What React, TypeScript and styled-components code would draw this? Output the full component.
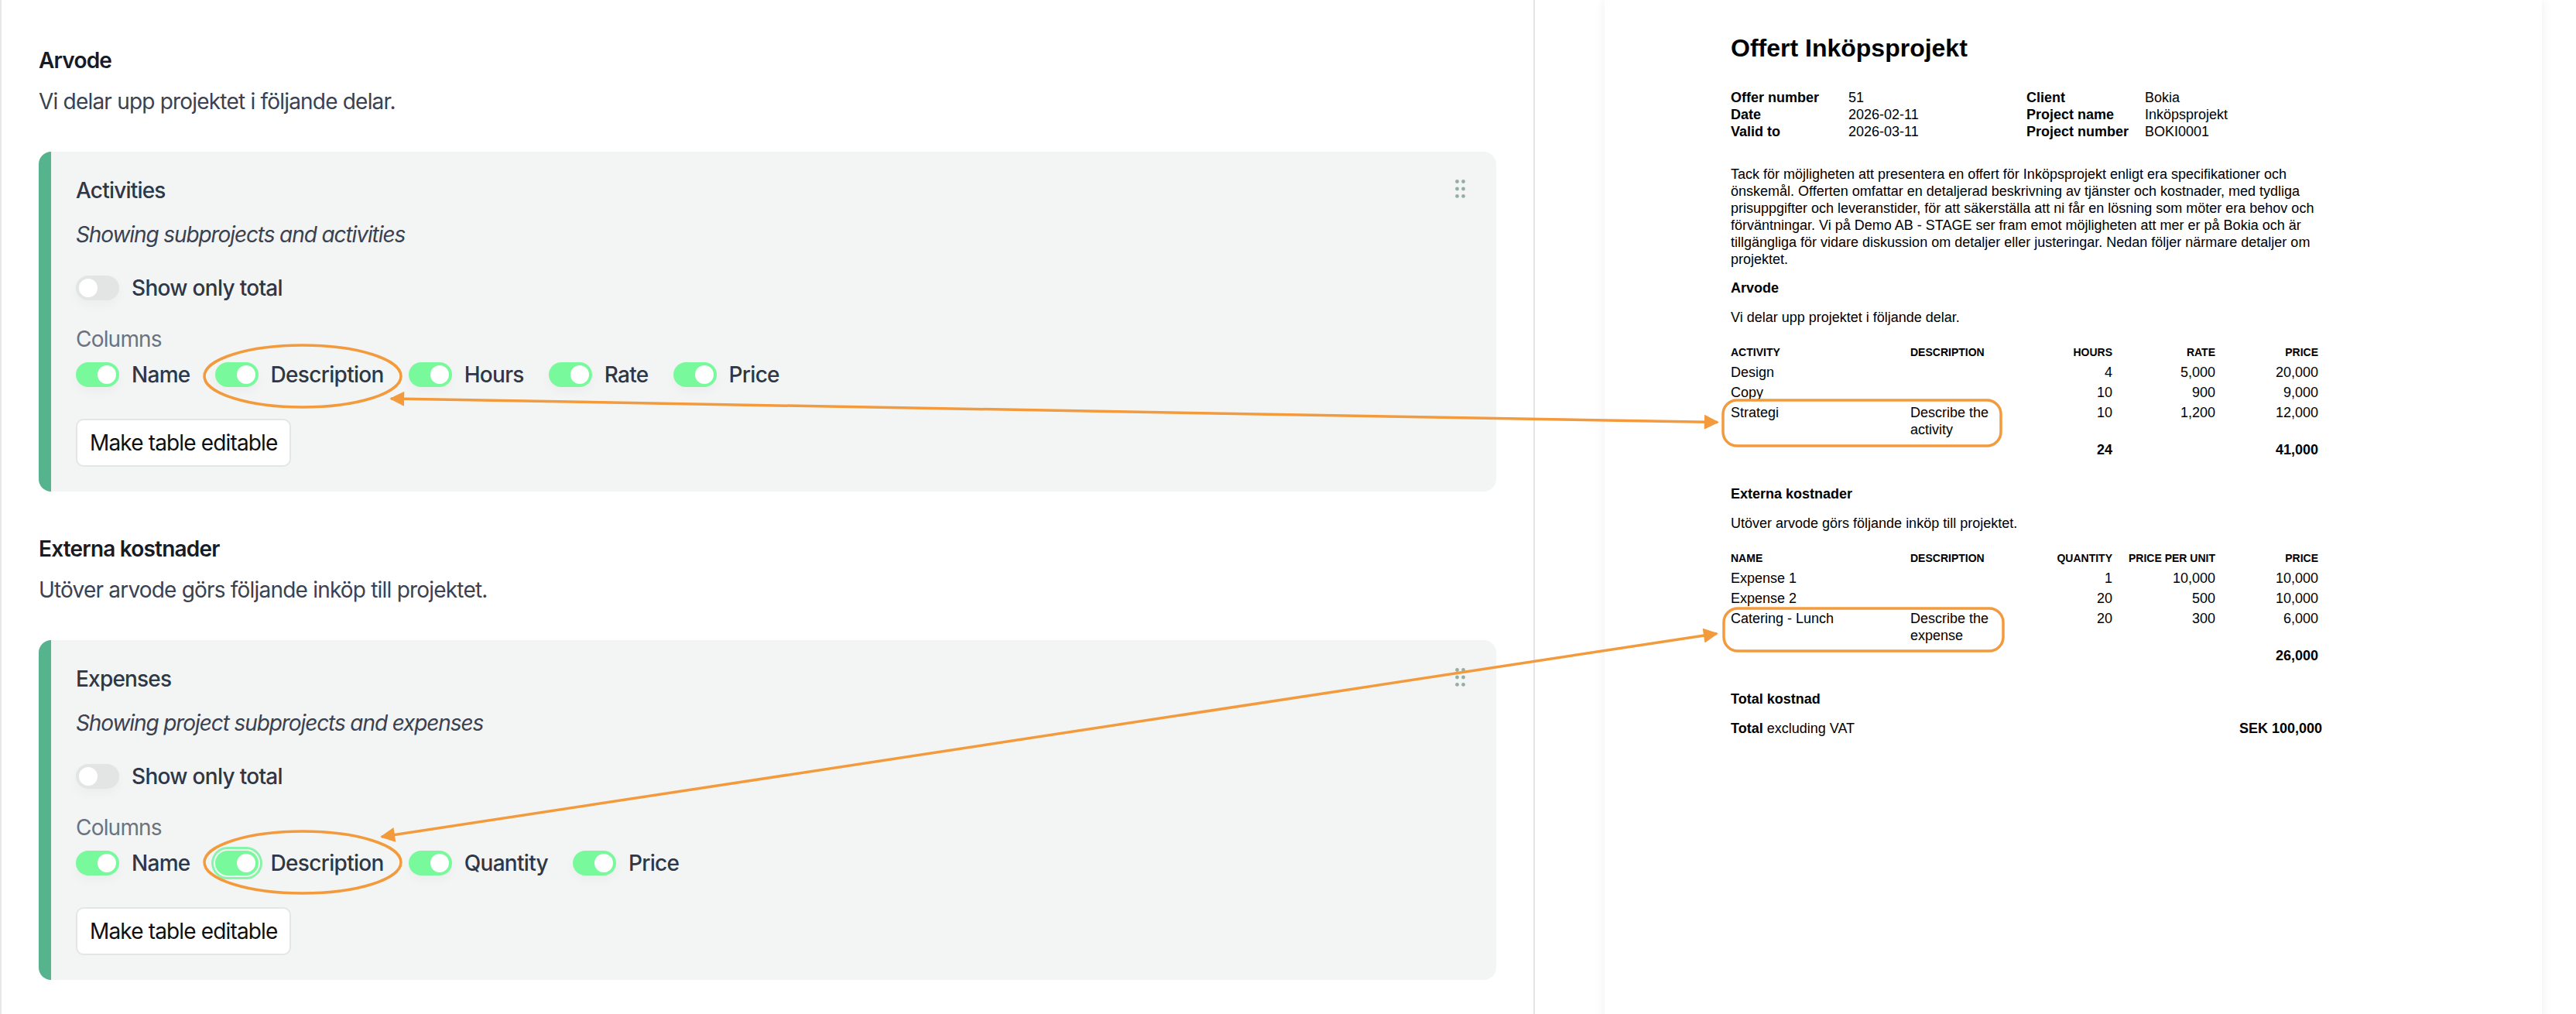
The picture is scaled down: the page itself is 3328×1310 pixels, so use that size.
import React from "react";
import styled, { createGlobalStyle } from "styled-components";

const GlobalStyle = createGlobalStyle`
  html, body { margin: 0; padding: 0; background: #ffffff; }
  body { width: 3328px; height: 1310px; overflow: hidden; font-family: Inter, "Noto Sans", sans-serif; }
  * { box-sizing: border-box; }
`;

const ORANGE = "#f39a3c";

const Shell = styled.div`
  position: relative;
  display: flex;
  width: 3328px;
  height: 1310px;
  overflow: hidden;
  background: #ffffff;
`;

/* ---------- left editor ---------- */

const Editor = styled.div`
  flex: none;
  width: 1983px;
  height: 100%;
  padding: 60px 48px 0;
  border-left: 2px solid #e6e7ea;
  border-right: 2px solid #e4e5e9;
  display: flex;
  flex-direction: column;
  font-family: Inter, "Noto Sans", sans-serif;
  letter-spacing: -0.8px;
`;

const Section = styled.section`
  display: flex;
  flex-direction: column;
  & + & {
    margin-top: 56px;
  }
`;

const SectionHeading = styled.h2`
  margin: 0;
  font-size: 28px;
  line-height: 36px;
  font-weight: 600;
  color: #161b26;
`;

const SectionLead = styled.p`
  margin: 17px 0 0;
  font-size: 28px;
  line-height: 36px;
  font-weight: 400;
  color: #3a4150;
`;

const Card = styled.div`
  margin-top: 47px;
  background: #f3f5f4;
  border-left: 16px solid #55b38e;
  border-radius: 16px;
  padding: 32px 40px 32px 32px;
  display: flex;
  flex-direction: column;
`;

const CardHeader = styled.div`
  display: flex;
  justify-content: space-between;
  align-items: flex-start;
  height: 36px;
`;

const CardTitle = styled.h3`
  margin: 0;
  font-size: 28px;
  line-height: 36px;
  font-weight: 500;
  color: #2f3747;
`;

const Grip = styled.svg`
  margin-top: 4px;
  flex: none;
`;

const CardSubtitle = styled.p`
  margin: 21px 0 0;
  font-size: 28px;
  line-height: 36px;
  font-style: italic;
  letter-spacing: -1.1px;
  color: #3a4150;
`;

const TotalRow = styled.div`
  margin-top: 35px;
  height: 32px;
  display: flex;
  align-items: center;
  gap: 16px;
`;

const ColumnsLabel = styled.div`
  margin-top: 32px;
  font-size: 28px;
  line-height: 36px;
  color: #6b7280;
`;

const ColumnsRow = styled.div`
  margin-top: 12px;
  height: 32px;
  display: flex;
  align-items: center;
  gap: 32px;
`;

const ToggleItem = styled.label`
  display: flex;
  align-items: center;
  gap: 16px;
`;

const Track = styled.span<{ $on: boolean; $focus?: boolean }>`
  flex: none;
  width: 56px;
  height: 32px;
  border-radius: 16px;
  padding: 4px;
  display: flex;
  align-items: center;
  justify-content: ${(p) => (p.$on ? "flex-end" : "flex-start")};
  background: ${(p) => (p.$on ? "#78fa9c" : "#e3e4e4")};
  box-shadow: ${(p) =>
    p.$focus ? "0 0 0 2px #f3f5f4, 0 0 0 5px #86f5a8" : "0 6px 14px rgba(0,0,0,0.03)"};
`;

const Knob = styled.span`
  width: 24px;
  height: 24px;
  border-radius: 50%;
  background: #ffffff;
`;

const ToggleText = styled.span`
  font-size: 28px;
  line-height: 36px;
  font-weight: 500;
  letter-spacing: -0.7px;
  color: #2f3747;
  white-space: nowrap;
`;

const EditButton = styled.button`
  margin-top: 41px;
  align-self: flex-start;
  height: 62px;
  padding: 0 16px;
  border: 2px solid #e3e5e9;
  border-radius: 10px;
  background: #ffffff;
  font-family: Inter, "Noto Sans", sans-serif;
  font-size: 28px;
  font-weight: 400;
  letter-spacing: -0.85px;
  color: #0f0f0f;
`;

/* ---------- right preview ---------- */

const Preview = styled.div`
  flex: 1;
  height: 100%;
  padding-left: 90px;
  background: #ffffff;
`;

const Page = styled.div`
  width: 1211px;
  min-height: 1400px;
  background: #ffffff;
  box-shadow: 0 0 14px rgba(0, 0, 0, 0.07);
  padding: 43px 0 0 163px;
  font-family: "Liberation Sans", Arial, sans-serif;
  color: #000000;
`;

const PdfBody = styled.div`
  width: 764px;
  display: flex;
  flex-direction: column;
`;

const PdfTitle = styled.h1`
  margin: 0;
  font-size: 32px;
  line-height: 38px;
  font-weight: 700;
`;

const MetaGrid = styled.div`
  margin-top: 34px;
  display: grid;
  grid-template-columns: 152px 230px 153px auto;
  font-size: 18px;
  line-height: 22px;
`;

const MetaLabel = styled.span`
  font-weight: 700;
`;

const MetaValue = styled.span`
  font-weight: 400;
`;

const Intro = styled.p`
  margin: 33px 0 0;
  width: 790px;
  font-size: 18px;
  line-height: 22px;
  white-space: nowrap;
`;

const PdfHeading = styled.h4<{ $mt: number }>`
  margin: ${(p) => p.$mt}px 0 0;
  font-size: 18px;
  line-height: 22px;
  font-weight: 700;
`;

const PdfLead = styled.p`
  margin: 16px 0 0;
  font-size: 18px;
  line-height: 22px;
`;

const Table = styled.div`
  margin-top: 23px;
  display: grid;
  grid-template-columns: 232px 128px 133px 133px 133px;
`;

const Th = styled.div<{ $right?: boolean }>`
  font-size: 14px;
  line-height: 22px;
  font-weight: 700;
  text-transform: uppercase;
  padding-bottom: 2px;
  text-align: ${(p) => (p.$right ? "right" : "left")};
  white-space: nowrap;
`;

const Td = styled.div<{ $right?: boolean; $bold?: boolean }>`
  font-size: 18px;
  line-height: 22px;
  padding: 2px 0;
  text-align: ${(p) => (p.$right ? "right" : "left")};
  font-weight: ${(p) => (p.$bold ? 700 : 400)};
`;

const TotalLine = styled.div`
  margin-top: 16px;
  display: flex;
  justify-content: space-between;
  font-size: 18px;
  line-height: 22px;
`;

const Strong = styled.span`
  font-weight: 700;
`;

/* ---------- annotation overlay ---------- */

const Overlay = styled.svg`
  position: absolute;
  left: 0;
  top: 0;
  pointer-events: none;
`;

/* ---------- pieces ---------- */

const GripIcon = () => (
  <Grip width="13" height="24" viewBox="0 0 13 24">
    {[2.5, 12, 21.4].map((cy) =>
      [2.5, 10.5].map((cx) => <circle key={`${cx}-${cy}`} cx={cx} cy={cy} r="2.4" fill="#94aea4" />)
    )}
  </Grip>
);

const Switch = ({ on, focus }: { on: boolean; focus?: boolean }) => (
  <Track $on={on} $focus={focus}>
    <Knob />
  </Track>
);

type ColumnToggle = { label: string; focus?: boolean };

const ConfigCard = ({
  title,
  subtitle,
  columns,
}: {
  title: string;
  subtitle: string;
  columns: ColumnToggle[];
}) => (
  <Card>
    <CardHeader>
      <CardTitle>{title}</CardTitle>
      <GripIcon />
    </CardHeader>
    <CardSubtitle>{subtitle}</CardSubtitle>
    <TotalRow>
      <Switch on={false} />
      <ToggleText>Show only total</ToggleText>
    </TotalRow>
    <ColumnsLabel>Columns</ColumnsLabel>
    <ColumnsRow>
      {columns.map((c) => (
        <ToggleItem key={c.label}>
          <Switch on focus={c.focus} />
          <ToggleText>{c.label}</ToggleText>
        </ToggleItem>
      ))}
    </ColumnsRow>
    <EditButton>Make table editable</EditButton>
  </Card>
);

type Row = { cells: string[] };

const activityRows: Row[] = [
  { cells: ["Design", "", "4", "5,000", "20,000"] },
  { cells: ["Copy", "", "10", "900", "9,000"] },
  { cells: ["Strategi", "Describe the activity", "10", "1,200", "12,000"] },
];

const expenseRows: Row[] = [
  { cells: ["Expense 1", "", "1", "10,000", "10,000"] },
  { cells: ["Expense 2", "", "20", "500", "10,000"] },
  { cells: ["Catering - Lunch", "Describe the expense", "20", "300", "6,000"] },
];

const PdfTable = ({ head, rows, total }: { head: string[]; rows: Row[]; total: string[] }) => (
  <Table>
    {head.map((h, i) => (
      <Th key={h + i} $right={i >= 2}>
        {h}
      </Th>
    ))}
    {rows.map((r, ri) =>
      r.cells.map((c, i) => (
        <Td key={`${ri}-${i}`} $right={i >= 2}>
          {c}
        </Td>
      ))
    )}
    {total.map((c, i) => (
      <Td key={`t-${i}`} $right={i >= 2} $bold>
        {c}
      </Td>
    ))}
  </Table>
);

export default function App() {
  return (
    <>
      <GlobalStyle />
      <Shell>
        <Editor>
          <Section>
            <SectionHeading>Arvode</SectionHeading>
            <SectionLead>Vi delar upp projektet i följande delar.</SectionLead>
            <ConfigCard
              title="Activities"
              subtitle="Showing subprojects and activities"
              columns={[
                { label: "Name" },
                { label: "Description" },
                { label: "Hours" },
                { label: "Rate" },
                { label: "Price" },
              ]}
            />
          </Section>
          <Section>
            <SectionHeading>Externa kostnader</SectionHeading>
            <SectionLead>Utöver arvode görs följande inköp till projektet.</SectionLead>
            <ConfigCard
              title="Expenses"
              subtitle="Showing project subprojects and expenses"
              columns={[
                { label: "Name" },
                { label: "Description", focus: true },
                { label: "Quantity" },
                { label: "Price" },
              ]}
            />
          </Section>
        </Editor>

        <Preview>
          <Page>
            <PdfBody>
              <PdfTitle>Offert Inköpsprojekt</PdfTitle>
              <MetaGrid>
                <MetaLabel>Offer number</MetaLabel>
                <MetaValue>51</MetaValue>
                <MetaLabel>Client</MetaLabel>
                <MetaValue>Bokia</MetaValue>
                <MetaLabel>Date</MetaLabel>
                <MetaValue>2026-02-11</MetaValue>
                <MetaLabel>Project name</MetaLabel>
                <MetaValue>Inköpsprojekt</MetaValue>
                <MetaLabel>Valid to</MetaLabel>
                <MetaValue>2026-03-11</MetaValue>
                <MetaLabel>Project number</MetaLabel>
                <MetaValue>BOKI0001</MetaValue>
              </MetaGrid>
              <Intro>
                Tack för möjligheten att presentera en offert för Inköpsprojekt enligt era specifikationer och
                <br />
                önskemål. Offerten omfattar en detaljerad beskrivning av tjänster och kostnader, med tydliga
                <br />
                prisuppgifter och leveranstider, för att säkerställa att ni får en lösning som möter era behov och
                <br />
                förväntningar. Vi på Demo AB - STAGE ser fram emot möjligheten att mer er på Bokia och är
                <br />
                tillgängliga för vidare diskussion om detaljer eller justeringar. Nedan följer närmare detaljer om
                <br />
                projektet.
              </Intro>

              <PdfHeading $mt={15}>Arvode</PdfHeading>
              <PdfLead>Vi delar upp projektet i följande delar.</PdfLead>
              <PdfTable
                head={["Activity", "Description", "Hours", "Rate", "Price"]}
                rows={activityRows}
                total={["", "", "24", "", "41,000"]}
              />

              <PdfHeading $mt={33}>Externa kostnader</PdfHeading>
              <PdfLead>Utöver arvode görs följande inköp till projektet.</PdfLead>
              <PdfTable
                head={["Name", "Description", "Quantity", "Price per unit", "Price"]}
                rows={expenseRows}
                total={["", "", "", "", "26,000"]}
              />

              <PdfHeading $mt={32}>Total kostnad</PdfHeading>
              <TotalLine>
                <span>
                  <Strong>Total</Strong> excluding VAT
                </span>
                <Strong>SEK 100,000</Strong>
              </TotalLine>
            </PdfBody>
          </Page>
        </Preview>

        <Overlay width="3328" height="1310" viewBox="0 0 3328 1310">
          <defs>
            <marker
              id="arrowHead"
              viewBox="0 0 10 10"
              refX="9"
              refY="5"
              markerWidth="22"
              markerHeight="19"
              markerUnits="userSpaceOnUse"
              orient="auto-start-reverse"
            >
              <path d="M0,0 L10,5 L0,10 z" fill={ORANGE} />
            </marker>
          </defs>
          <g fill="none" stroke={ORANGE} strokeWidth="3.5">
            <ellipse cx="391" cy="486" rx="127" ry="40" />
            <ellipse cx="391" cy="1114" rx="127" ry="40" />
            <rect x="2226" y="517" width="359" height="59" rx="18" />
            <rect x="2227" y="786" width="361" height="55" rx="18" />
            <line
              x1="505"
              y1="515"
              x2="2219"
              y2="545.5"
              markerStart="url(#arrowHead)"
              markerEnd="url(#arrowHead)"
            />
            <line
              x1="493"
              y1="1081"
              x2="2218"
              y2="818.5"
              markerStart="url(#arrowHead)"
              markerEnd="url(#arrowHead)"
            />
          </g>
        </Overlay>
      </Shell>
    </>
  );
}
